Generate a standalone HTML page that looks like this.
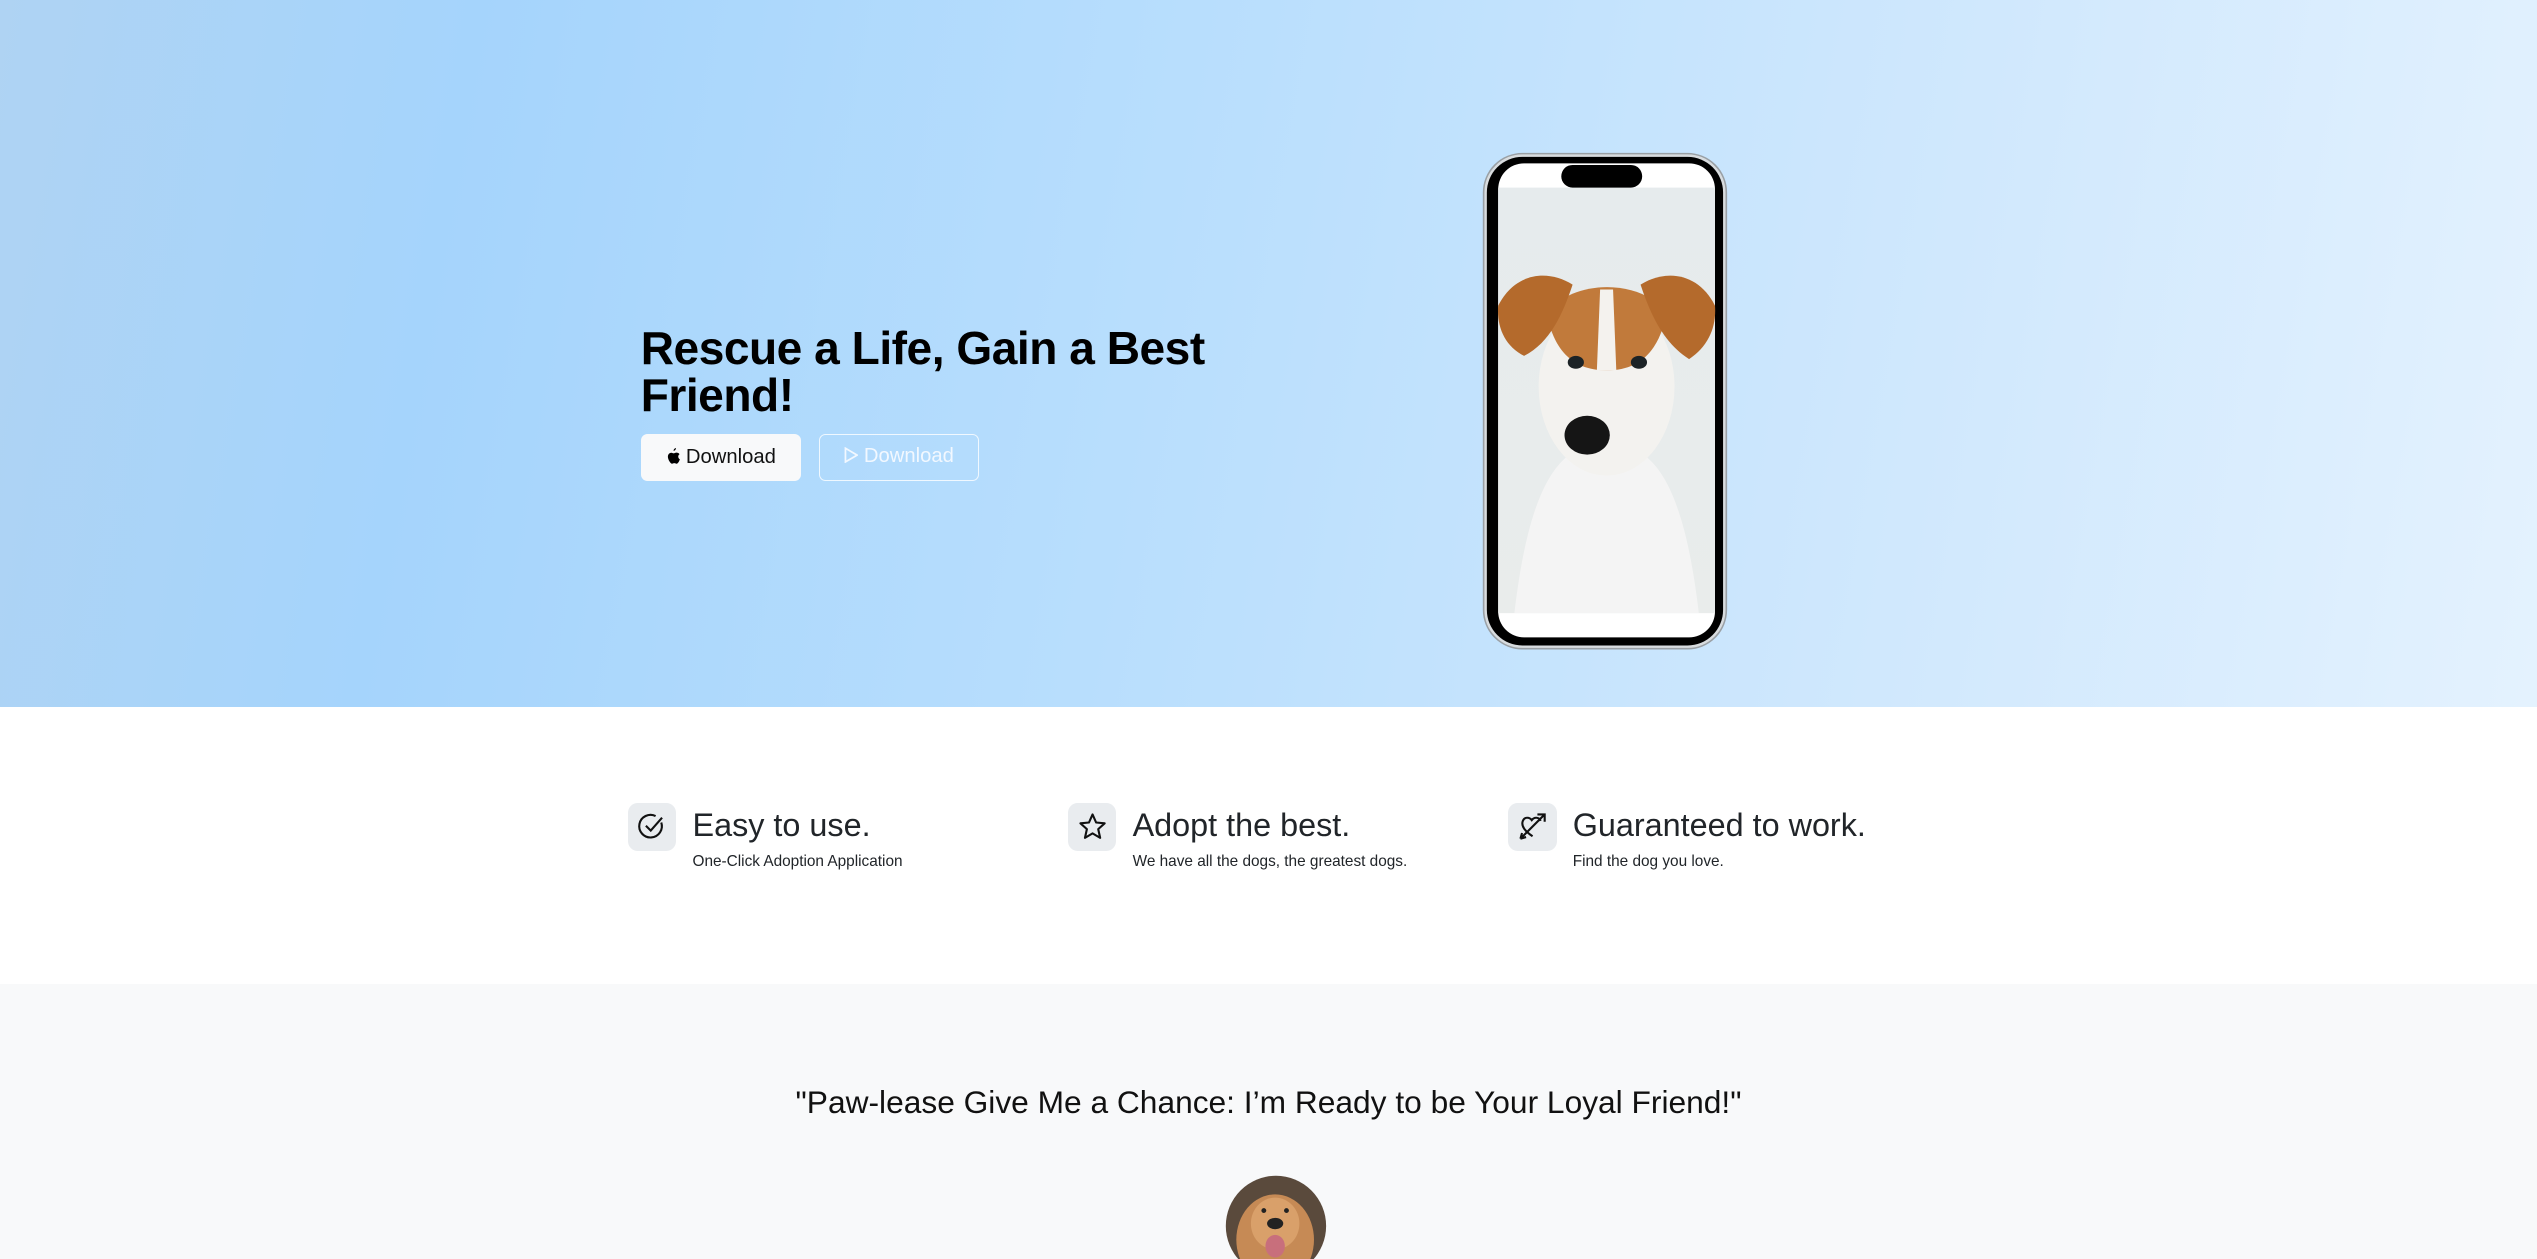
<!DOCTYPE html>
<html><head><meta charset="utf-8"><style>
html,body{margin:0;padding:0;}
body{width:2537px;height:1259px;overflow:hidden;font-family:"Liberation Sans",sans-serif;}
#w{zoom:1.618;width:1568px;height:778px;position:relative;overflow:hidden;background:#f8f9fa;}
.hero{position:absolute;left:0;top:0;width:1568px;height:437px;background:linear-gradient(100deg,#afd3f3 0%,#a5d4fc 18%,#b8defd 45%,#d0e8fd 75%,#e4f2fe 100%);}
h1{position:absolute;left:396px;top:201px;margin:0;font-size:28.5px;line-height:29px;font-weight:bold;color:#000;letter-spacing:-0.3px;}
.b{position:absolute;top:268px;width:99px;height:29px;border-radius:4px;box-sizing:border-box;font-size:12.5px;line-height:29px;text-align:center;}
.b1{left:396px;background:#f8f9fa;color:#111;}
.b2{left:506px;border:1px solid rgba(255,255,255,.8);color:#f2f8ff;line-height:27px;}
.feat{position:absolute;left:0;top:437px;width:1568px;height:171px;background:#fff;}
.f{position:absolute;top:59px;}
.ic{position:absolute;left:0;top:0;width:30px;height:30px;background:#e9ecef;border-radius:6px;}
.ic svg{position:absolute;left:6px;top:6px;}
.t{position:absolute;left:40px;top:1px;font-size:20px;line-height:26px;color:#212529;white-space:nowrap;}
.s{position:absolute;left:40px;top:31px;font-size:9.5px;color:#212529;white-space:nowrap;}
.q{position:absolute;left:0;top:670px;width:1568px;text-align:center;font-size:19.6px;color:#111;}
</style></head><body><div id="w">
<div class="hero">
<h1>Rescue a Life, Gain a Best<br>Friend!</h1>
<div class="b b1"><svg width="9" height="10" viewBox="0 0 16 18" style="vertical-align:-1px"><path d="M11 0c0 1.5-1 3-2.6 3.2C8.2 1.7 9.5.2 11 0zM13.5 9.5c0 2 1.5 3 1.8 3-.6 2-2 5-3.6 5-1 0-1.4-.6-2.6-.6s-1.6.6-2.6.6C5 17.5 2 13 2 9.8 2 6.9 4 5.3 5.8 5.3c1.1 0 2 .7 2.7.7.6 0 1.7-.8 3-.8.6 0 2.3.1 3.4 1.7-.1.1-1.4.9-1.4 2.6z" fill="#000"/></svg> Download</div>
<div class="b b2"><svg width="9" height="10" viewBox="0 0 10 11" style="vertical-align:-1px"><path d="M1 .8L9 5.5 1 10.2z" fill="none" stroke="#f2f8ff" stroke-width="1.2"/></svg> Download</div>
<svg style="position:absolute;left:916px;top:94px" width="153" height="310" viewBox="0 0 153 310">
<defs><linearGradient id="bg" x1="0" y1="0" x2="0" y2="1"><stop offset="0" stop-color="#e6ebed"/><stop offset="1" stop-color="#e9eceb"/></linearGradient></defs>
<rect x="1" y="1" width="150" height="306" rx="24" fill="#d8dcdf" stroke="#9aa0a5" stroke-width="1"/>
<rect x="3" y="3" width="146" height="302" rx="22" fill="#000"/>
<rect x="10" y="7" width="134" height="293" rx="16" fill="#fff"/>
<rect x="10" y="22" width="134" height="263" fill="url(#bg)"/>
<path d="M20 285 C30 200 50 180 77 180 C104 180 124 200 134 285Z" fill="#f4f4f4"/>
<ellipse cx="77" cy="145" rx="42" ry="55" fill="#f3f2ef"/>
<path d="M40 100 C55 78 100 78 114 100 C110 120 100 135 77 135 C54 135 44 120 40 100Z" fill="#c17a3b"/>
<path d="M73 85 L81 85 L83 135 L71 135Z" fill="#f4f2ee"/>
<path d="M10 95 C20 75 40 72 56 82 C50 100 42 118 26 126 C14 120 9 108 10 95Z" fill="#b46a2c"/>
<path d="M144 95 C134 75 114 72 98 82 C104 100 112 118 128 128 C140 120 145 108 144 95Z" fill="#b46a2c"/>
<ellipse cx="58" cy="130" rx="5" ry="4" fill="#1c2326"/>
<ellipse cx="97" cy="130" rx="5" ry="4" fill="#1c2326"/>
<ellipse cx="65" cy="175" rx="14" ry="12" fill="#151515"/>
<rect x="49" y="8" width="50" height="14" rx="7" fill="#000"/>
</svg>
</div>
<div class="feat">
<div class="f" style="left:388px"><div class="ic"><svg width="18" height="18" viewBox="0 0 18 18"><path d="M15 6.5A7 7 0 1 1 11.5 2.5" fill="none" stroke="#111" stroke-width="1.3"/><path d="M5.5 8.5l3 3 7-8" fill="none" stroke="#111" stroke-width="1.3"/></svg></div><div class="t">Easy to use.</div><div class="s">One-Click Adoption Application</div></div>
<div class="f" style="left:660px"><div class="ic"><svg width="18" height="18" viewBox="0 0 18 18"><path d="M9 1.5l2.2 5 5.3.5-4 3.6 1.2 5.4L9 13.2 4.3 16l1.2-5.4-4-3.6 5.3-.5z" fill="none" stroke="#111" stroke-width="1.3" stroke-linejoin="round"/></svg></div><div class="t">Adopt the best.</div><div class="s">We have all the dogs, the greatest dogs.</div></div>
<div class="f" style="left:932px"><div class="ic"><svg width="18" height="18" viewBox="0 0 18 18"><path d="M9 15C3 11 2 8 3 5.5S7 3 8.5 5C10 3 13 3 14 5.5" fill="none" stroke="#111" stroke-width="1.3"/><path d="M1.5 16.5L16.5 1.5M12 1.5h4.5V6M1.5 16.5l1-3.5M1.5 16.5l3.5-1" fill="none" stroke="#111" stroke-width="1.3"/></svg></div><div class="t">Guaranteed to work.</div><div class="s">Find the dog you love.</div></div>
</div>
<div class="q">"Paw-lease Give Me a Chance: I’m Ready to be Your Loyal Friend!"</div>
<svg style="position:absolute;left:757px;top:726px" width="63" height="63" viewBox="0 0 63 63">
<defs><clipPath id="c"><circle cx="31.5" cy="31.5" r="31"/></clipPath></defs>
<g clip-path="url(#c)"><rect width="63" height="63" fill="#5a4a3c"/>
<ellipse cx="31" cy="40" rx="24" ry="28" fill="#c68a55"/>
<ellipse cx="31" cy="30" rx="15" ry="16" fill="#d9a06a"/>
<ellipse cx="31" cy="30" rx="5" ry="3.5" fill="#222"/>
<ellipse cx="31" cy="44" rx="6" ry="7" fill="#c86f7c"/>
<circle cx="24" cy="22" r="1.5" fill="#222"/><circle cx="38" cy="22" r="1.5" fill="#222"/></g>
</svg>
</div></body></html>
